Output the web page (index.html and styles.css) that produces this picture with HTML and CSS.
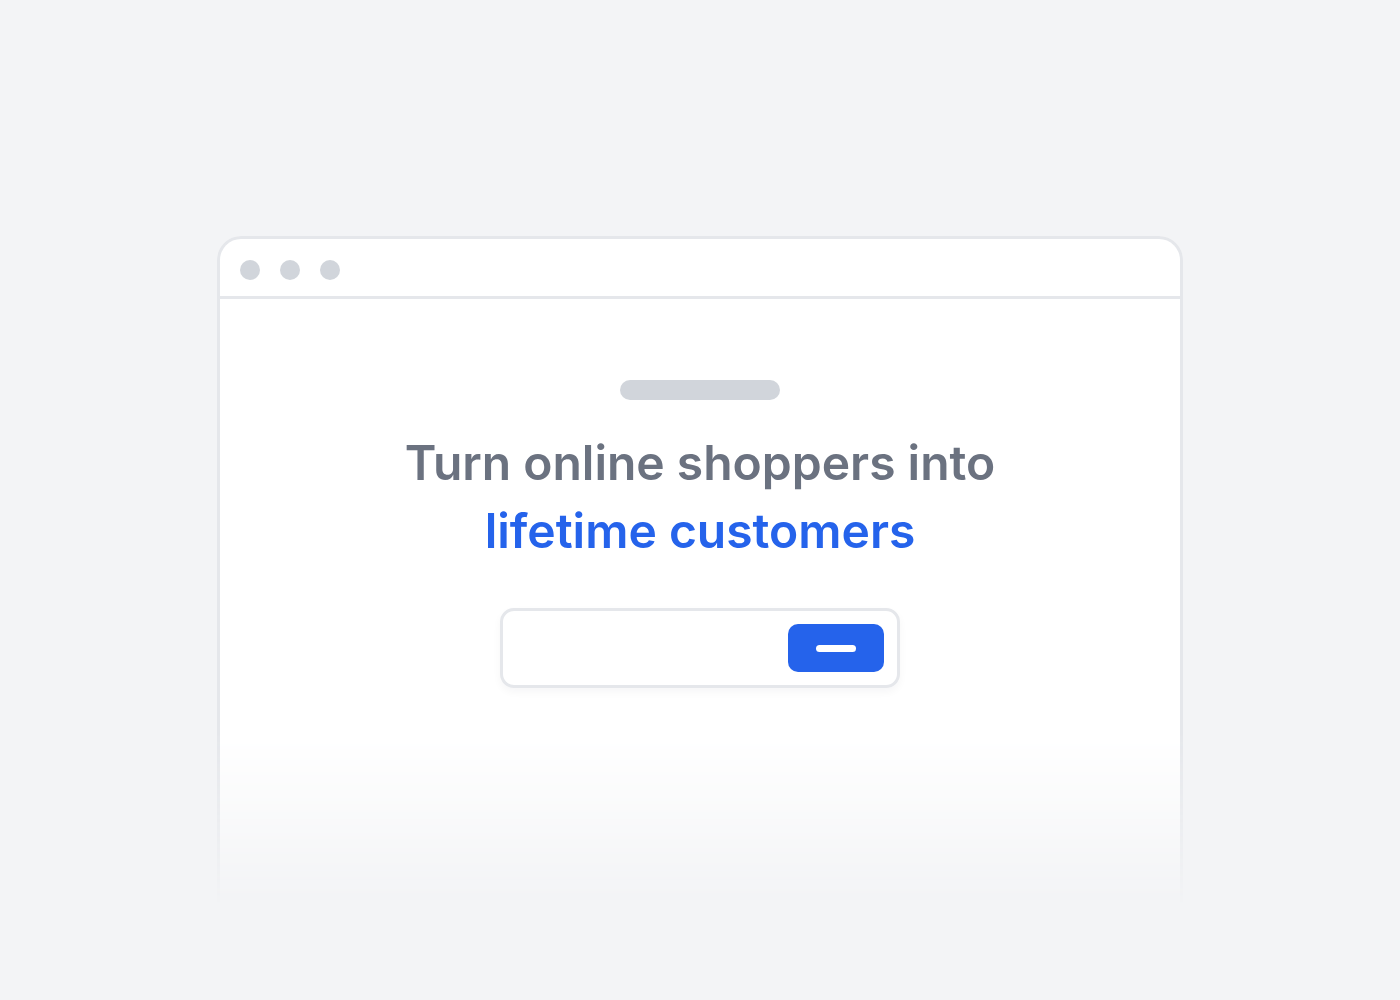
FILE: index.html
```html
<!DOCTYPE html>
<html lang="en">
<head>
<meta charset="utf-8">
<title>Browser mockup</title>
<link rel="stylesheet" href="styles.css">
</head>
<body>
<main class="stage">
  <div class="window">
    <div class="window-bar">
      <span class="dot"></span>
      <span class="dot"></span>
      <span class="dot"></span>
    </div>
    <div class="window-body">
      <div class="pill"></div>
      <h1 class="headline">Turn online shoppers into<br><span class="accent">lifetime customers</span></h1>
      <div class="signup">
        <div class="signup-btn"><span class="btn-bar"></span></div>
      </div>
    </div>
  </div>
</main>
</body>
</html>
```
FILE: styles.css
```css
html, body {
  margin: 0;
  padding: 0;
  background: #f3f4f6;
  font-family: Inter, "Noto Sans", sans-serif;
}
.stage {
  width: 1400px;
  height: 1000px;
  display: flex;
  justify-content: center;
  padding-top: 236px;
  box-sizing: border-box;
}
.window {
  width: 966px;
  height: 670px;
  box-sizing: border-box;
  background: #ffffff;
  border: 3px solid #e5e7eb;
  border-bottom: none;
  border-radius: 24px 24px 0 0;
  box-shadow: 0 0 12px rgba(17, 24, 39, 0.04);
  -webkit-mask-image: linear-gradient(to bottom, #000 0%, #000 74%, transparent 100%);
  mask-image: linear-gradient(to bottom, #000 0%, #000 74%, transparent 100%);
  display: flex;
  flex-direction: column;
}
.window-bar {
  height: 60px;
  box-sizing: border-box;
  padding: 21px 20px 0;
  display: flex;
  gap: 20px;
  border-bottom: 3px solid #e5e7eb;
}
.dot {
  width: 20px;
  height: 20px;
  border-radius: 50%;
  background: #d1d5db;
}
.window-body {
  display: flex;
  flex-direction: column;
  align-items: center;
  padding-top: 81px;
}
.pill {
  width: 160px;
  height: 20px;
  border-radius: 10px;
  background: #d1d5db;
}
.headline {
  margin: 29px 0 0;
  font-size: 48px;
  line-height: 68px;
  font-weight: 600;
  color: #6b7280;
  text-align: center;
}
.accent {
  color: #2563eb;
}
.signup {
  margin-top: 43px;
  width: 400px;
  height: 80px;
  box-sizing: border-box;
  border: 3px solid #e5e7eb;
  border-radius: 14px;
  padding: 13px;
  display: flex;
  justify-content: flex-end;
  box-shadow: 0 4px 8px rgba(17, 24, 39, 0.04);
}
.signup-btn {
  width: 96px;
  height: 48px;
  border-radius: 10px;
  background: #2563eb;
  display: flex;
  align-items: center;
  justify-content: center;
}
.btn-bar {
  width: 40px;
  height: 7px;
  border-radius: 4px;
  background: #ffffff;
}
```
